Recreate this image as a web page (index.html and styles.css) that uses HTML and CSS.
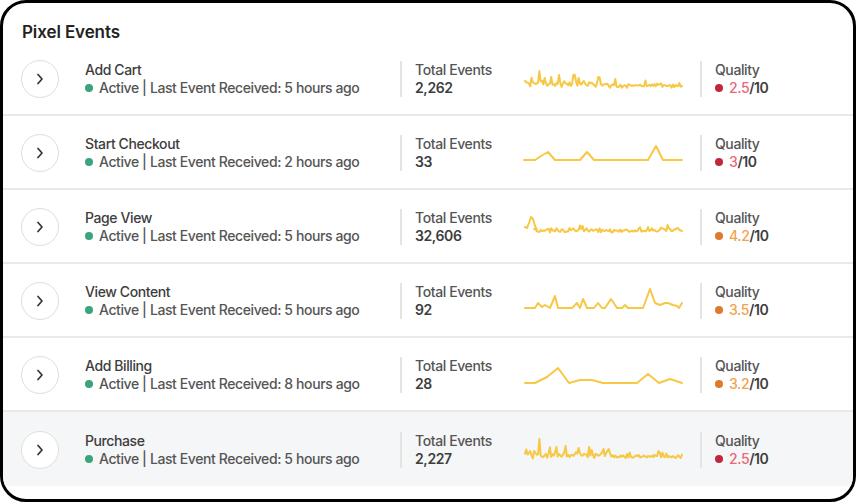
FILE: index.html
```html
<!DOCTYPE html>
<html lang="en">
<head>
<meta charset="utf-8">
<title>Pixel Events</title>
<link rel="stylesheet" href="styles.css">
</head>
<body>
<div class="frame">
  <h1 class="title">Pixel Events</h1>
  <div class="list">
    <div class="row">
      <button class="toggle"><svg width="8" height="12" viewBox="0 0 8 12"><path d="M2 1.5 L6 6 L2 10.5" fill="none" stroke="#333" stroke-width="1.7" stroke-linecap="round" stroke-linejoin="round"/></svg></button>
      <div class="event">
        <div class="event-name">Add Cart</div>
        <div class="event-status"><span class="dot dot-green"></span>Active | Last Event Received: 5 hours ago</div>
      </div>
      <div class="stat total">
        <div class="stat-label">Total Events</div>
        <div class="stat-value">2,262</div>
      </div>
      <svg class="spark" viewBox="0 0 160 28"><polyline id="s1" points=""/></svg>
      <div class="stat quality">
        <div class="stat-label">Quality</div>
        <div class="stat-value"><span class="dot dot-red"></span><span class="q-red">2.5</span>/10</div>
      </div>
    </div>
    <div class="row">
      <button class="toggle"><svg width="8" height="12" viewBox="0 0 8 12"><path d="M2 1.5 L6 6 L2 10.5" fill="none" stroke="#333" stroke-width="1.7" stroke-linecap="round" stroke-linejoin="round"/></svg></button>
      <div class="event">
        <div class="event-name">Start Checkout</div>
        <div class="event-status"><span class="dot dot-green"></span>Active | Last Event Received: 2 hours ago</div>
      </div>
      <div class="stat total">
        <div class="stat-label">Total Events</div>
        <div class="stat-value">33</div>
      </div>
      <svg class="spark" viewBox="0 0 160 28"><polyline points="1,21 12,21 18,17 25,13 32,21 57,21 64,13 71,21 125,21 133,7 140,21 159,21"/></svg>
      <div class="stat quality">
        <div class="stat-label">Quality</div>
        <div class="stat-value"><span class="dot dot-red"></span><span class="q-red">3</span>/10</div>
      </div>
    </div>
    <div class="row">
      <button class="toggle"><svg width="8" height="12" viewBox="0 0 8 12"><path d="M2 1.5 L6 6 L2 10.5" fill="none" stroke="#333" stroke-width="1.7" stroke-linecap="round" stroke-linejoin="round"/></svg></button>
      <div class="event">
        <div class="event-name">Page View</div>
        <div class="event-status"><span class="dot dot-green"></span>Active | Last Event Received: 5 hours ago</div>
      </div>
      <div class="stat total">
        <div class="stat-label">Total Events</div>
        <div class="stat-value">32,606</div>
      </div>
      <svg class="spark" viewBox="0 0 160 28"><polyline id="s3" points=""/></svg>
      <div class="stat quality">
        <div class="stat-label">Quality</div>
        <div class="stat-value"><span class="dot dot-orange"></span><span class="q-orange">4.2</span>/10</div>
      </div>
    </div>
    <div class="row">
      <button class="toggle"><svg width="8" height="12" viewBox="0 0 8 12"><path d="M2 1.5 L6 6 L2 10.5" fill="none" stroke="#333" stroke-width="1.7" stroke-linecap="round" stroke-linejoin="round"/></svg></button>
      <div class="event">
        <div class="event-name">View Content</div>
        <div class="event-status"><span class="dot dot-green"></span>Active | Last Event Received: 5 hours ago</div>
      </div>
      <div class="stat total">
        <div class="stat-label">Total Events</div>
        <div class="stat-value">92</div>
      </div>
      <svg class="spark" viewBox="0 0 160 28"><polyline points="2,21 12,21 15,16 19,20 22,18 27,21 32,9 35,21 49,21 54,16 57,21 60,12 64,21 71,21 75,16 79,21 82,21 88,12 94,21 99,21 102,18 105,21 120,21 127,2 132,16 137,18 142,16 145,16 150,18 154,19 156,21 159,16"/></svg>
      <div class="stat quality">
        <div class="stat-label">Quality</div>
        <div class="stat-value"><span class="dot dot-orange"></span><span class="q-orange">3.5</span>/10</div>
      </div>
    </div>
    <div class="row">
      <button class="toggle"><svg width="8" height="12" viewBox="0 0 8 12"><path d="M2 1.5 L6 6 L2 10.5" fill="none" stroke="#333" stroke-width="1.7" stroke-linecap="round" stroke-linejoin="round"/></svg></button>
      <div class="event">
        <div class="event-name">Add Billing</div>
        <div class="event-status"><span class="dot dot-green"></span>Active | Last Event Received: 8 hours ago</div>
      </div>
      <div class="stat total">
        <div class="stat-label">Total Events</div>
        <div class="stat-value">28</div>
      </div>
      <svg class="spark" viewBox="0 0 160 28"><polyline points="2,22 12,22 24,16 35,7 46,22 57,19 69,19 80,22 114,22 125,13 136,22 147,18 159,22"/></svg>
      <div class="stat quality">
        <div class="stat-label">Quality</div>
        <div class="stat-value"><span class="dot dot-orange"></span><span class="q-orange">3.2</span>/10</div>
      </div>
    </div>
    <div class="row row-active">
      <button class="toggle"><svg width="8" height="12" viewBox="0 0 8 12"><path d="M2 1.5 L6 6 L2 10.5" fill="none" stroke="#333" stroke-width="1.7" stroke-linecap="round" stroke-linejoin="round"/></svg></button>
      <div class="event">
        <div class="event-name">Purchase</div>
        <div class="event-status"><span class="dot dot-green"></span>Active | Last Event Received: 5 hours ago</div>
      </div>
      <div class="stat total">
        <div class="stat-label">Total Events</div>
        <div class="stat-value">2,227</div>
      </div>
      <svg class="spark" viewBox="0 0 160 28"><polyline id="s6" points=""/></svg>
      <div class="stat quality">
        <div class="stat-label">Quality</div>
        <div class="stat-value"><span class="dot dot-red"></span><span class="q-red">2.5</span>/10</div>
      </div>
    </div>
  </div>
</div>
<script src="script.js"></script>
</body>
</html>
```
FILE: styles.css
```css
* { box-sizing: border-box; }
html, body { margin: 0; padding: 0; background: #fff; }
body {
  font-family: Inter, "Noto Sans", sans-serif;
  color: #444;
  width: 856px;
  height: 502px;
  overflow: hidden;
}
.frame {
  width: 856px;
  height: 502px;
  border: 3px solid #000;
  border-radius: 26px;
  overflow: hidden;
  background: #fff;
}
.title {
  margin: 0;
  padding: 20px 0 1px 19px;
  height: 39px;
  font-size: 17px;
  line-height: 18px;
  font-weight: 600;
  letter-spacing: -0.1px;
  color: #222;
}
.list { display: flex; flex-direction: column; }
.row {
  display: flex;
  align-items: center;
  height: 74px;
  padding-top: 1px;
  border-bottom: 2px solid #e9e9e9;
}
.row-active {
  background: #f5f6f7;
  border-bottom: none;
}
.toggle {
  flex: none;
  width: 38px;
  height: 38px;
  margin: 0 26px 0 18px;
  padding: 0;
  border: 1.5px solid #dedede;
  border-radius: 50%;
  background: #fff;
  display: flex;
  align-items: center;
  justify-content: center;
}
.event {
  flex: none;
  width: 315px;
  font-size: 14px;
  line-height: 18px;
  font-weight: 500;
  letter-spacing: -0.4px;
}
.event-name { color: #3d3d3d; }
.event-status { color: #555; display: flex; align-items: center; }
.dot {
  display: inline-block;
  width: 8px;
  height: 8px;
  border-radius: 50%;
  margin-right: 6px;
  flex: none;
}
.dot-green { background: #3aa57a; }
.dot-red { background: #c2283b; }
.dot-orange { background: #e07a2b; }
.stat {
  flex: none;
  height: 36px;
  border-left: 2px solid #e4e4e4;
  padding-left: 13px;
  font-size: 14px;
  line-height: 18px;
  font-weight: 500;
  letter-spacing: -0.4px;
}
.total { width: 123px; }
.stat-label { color: #555; }
.stat-value { color: #3d3d3d; font-weight: 600; display: flex; align-items: center; }
.q-red { color: #e8697a; font-weight: 500; }
.q-orange { color: #f2a24e; font-weight: 500; }
.spark {
  flex: none;
  width: 160px;
  height: 28px;
  margin-right: 17px;
  overflow: visible;
}
.spark polyline {
  fill: none;
  stroke: #f7c844;
  stroke-width: 2;
  stroke-linejoin: round;
  stroke-linecap: round;
}
```
FILE: script.js
```js
function rng(seed) {
  var s = seed;
  return function () {
    s = (s * 16807) % 2147483647;
    return (s - 1) / 2147483646;
  };
}
function noisy(id, seed, base, amp, spikes, head) {
  var r = rng(seed);
  var n = 120;
  var pts = [];
  for (var i = 0; i <= n; i++) {
    var x = 2 + i * (157 / n);
    var t = i / n;
    var a = amp(t);
    var y = base + (r() - 0.35) * 3 - r() * a * 0.5;
    if (r() < 0.18) y -= r() * a;
    pts.push([x, y]);
  }
  spikes.forEach(function (s) {
    var best = 0, d = 1e9;
    for (var i = 0; i < pts.length; i++) {
      var dd = Math.abs(pts[i][0] - s[0]);
      if (dd < d) { d = dd; best = i; }
    }
    pts[best][1] = s[1];
  });
  if (head) {
    head.forEach(function (h, i) { pts[i] = h; });
  }
  var str = pts.map(function (p) { return p[0].toFixed(1) + ',' + p[1].toFixed(1); }).join(' ');
  document.getElementById(id).setAttribute('points', str);
}
noisy('s1', 7, 21, function (t) { return t < 0.5 ? 9 : 4; }, [[16, 6], [28, 12], [36, 10], [55, 13], [75, 12], [92, 14]], null);
noisy('s3', 31, 18, function (t) { return 4; }, [[144, 12], [60, 13], [125, 14]], [[2, 14], [4, 15], [6, 10], [8, 4], [10, 6], [12, 13], [14, 17]]);
noisy('s6', 19, 21, function (t) { return t < 0.55 ? 9 : 4; }, [[16, 3], [34, 11], [42, 10], [56, 12], [66, 11], [80, 13], [86, 13]], null);
```
